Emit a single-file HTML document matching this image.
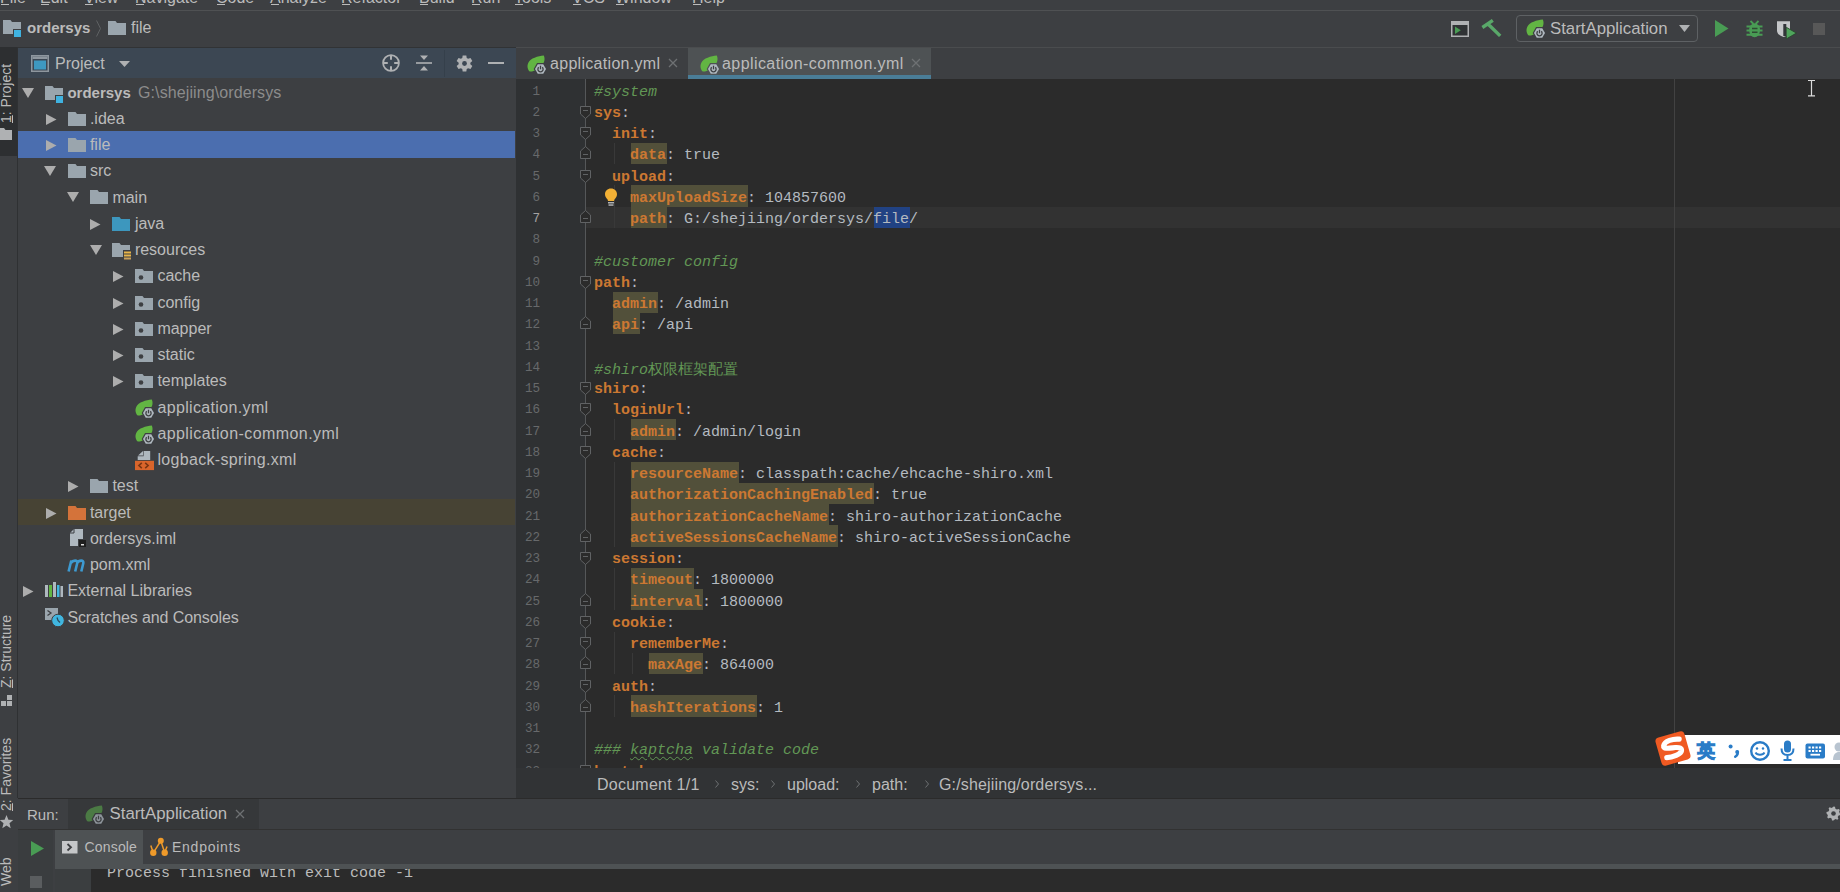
<!DOCTYPE html><html><head><meta charset="utf-8"><style>
*{margin:0;padding:0;box-sizing:border-box}
html,body{width:1840px;height:892px;overflow:hidden;background:#3D3F42;font-family:"Liberation Sans",sans-serif;color:#BBBBBB}
.a{position:absolute}
.t{position:absolute;white-space:nowrap;font-size:16px;line-height:20px;color:#BBBBBB}
.m{font-family:"Liberation Mono",monospace}
svg{position:absolute;overflow:visible}
.ln{position:absolute;left:0;width:24px;text-align:right;font-family:"Liberation Mono",monospace;font-size:12.6px;line-height:21.25px;color:#67696B}
.cl{position:absolute;left:78px;white-space:pre;font-family:"Liberation Mono",monospace;font-size:15px;line-height:21.25px;color:#B4BAC0}
.k{color:#CC7832;font-weight:bold}
.kh{color:#CC7832;font-weight:bold;background:#52503A}
.c{color:#629755;font-style:italic}
.cjk{font-family:"Liberation Sans",sans-serif}
</style></head><body>
<div class="a" style="left:0;top:0;width:1840px;height:10px;overflow:hidden">
<div class="t" style="left:0px;top:-12px">File</div>
<div class="a" style="left:1px;top:4px;width:8px;height:1px;background:#BBBBBB"></div>
<div class="t" style="left:40px;top:-12px">Edit</div>
<div class="a" style="left:41px;top:4px;width:8px;height:1px;background:#BBBBBB"></div>
<div class="t" style="left:84px;top:-12px">View</div>
<div class="a" style="left:85px;top:4px;width:8px;height:1px;background:#BBBBBB"></div>
<div class="t" style="left:135px;top:-12px">Navigate</div>
<div class="a" style="left:136px;top:4px;width:8px;height:1px;background:#BBBBBB"></div>
<div class="t" style="left:216px;top:-12px">Code</div>
<div class="a" style="left:217px;top:4px;width:8px;height:1px;background:#BBBBBB"></div>
<div class="t" style="left:270px;top:-12px">Analyze</div>
<div class="a" style="left:271px;top:4px;width:8px;height:1px;background:#BBBBBB"></div>
<div class="t" style="left:341px;top:-12px">Refactor</div>
<div class="a" style="left:342px;top:4px;width:8px;height:1px;background:#BBBBBB"></div>
<div class="t" style="left:419px;top:-12px">Build</div>
<div class="a" style="left:420px;top:4px;width:8px;height:1px;background:#BBBBBB"></div>
<div class="t" style="left:471px;top:-12px">Run</div>
<div class="a" style="left:472px;top:4px;width:8px;height:1px;background:#BBBBBB"></div>
<div class="t" style="left:514px;top:-12px">Tools</div>
<div class="a" style="left:515px;top:4px;width:8px;height:1px;background:#BBBBBB"></div>
<div class="t" style="left:572px;top:-12px">VCS</div>
<div class="a" style="left:573px;top:4px;width:8px;height:1px;background:#BBBBBB"></div>
<div class="t" style="left:615px;top:-12px">Window</div>
<div class="a" style="left:616px;top:4px;width:8px;height:1px;background:#BBBBBB"></div>
<div class="t" style="left:692px;top:-12px">Help</div>
<div class="a" style="left:693px;top:4px;width:8px;height:1px;background:#BBBBBB"></div>
</div>
<div class="a" style="left:0;top:10px;width:1840px;height:1px;background:#4F5153"></div>
<svg style="left:3px;top:20px" width="19" height="18" viewBox="0 0 19 18"><path d="M0 0H7.5L9 2H18V9H10V14H0Z" fill="#9AA5AD"/><rect x="10.5" y="9.5" width="8" height="8" fill="#3FB2E0" stroke="#3D3F42" stroke-width="1"/></svg>
<div class="t" style="left:27px;top:18px;font-weight:bold;font-size:15px;">ordersys</div>
<svg style="left:96px;top:20px" width="5" height="17" viewBox="0 0 5 17"><path d="M0.5 0.5L4.5 8.5L0.5 16.5" fill="none" stroke="#5E6163" stroke-width="1"/></svg>
<svg style="left:108px;top:21px" width="18" height="14" viewBox="0 0 18 14"><path d="M0 0H7.5L9 2H18V14H0Z" fill="#9AA5AD"/></svg>
<div class="t" style="left:131px;top:18px">file</div>
<svg style="left:1451px;top:21px" width="18" height="16" viewBox="0 0 18 16"><rect x="0.75" y="0.75" width="16.5" height="14.5" fill="#303335" stroke="#AFB1B3" stroke-width="1.5"/><rect x="1" y="1" width="16" height="3" fill="#AFB1B3"/><path d="M4 5.5L9.8 9.2L4 13Z" fill="#499C54"/></svg>
<svg style="left:1476px;top:14px" width="30" height="30" viewBox="0 0 30 30"><path d="M6.4 13.5L16.8 6.4M12 10L24.2 21.9" stroke="#59A869" stroke-width="3.4"/></svg>
<div class="a" style="left:1516px;top:15px;width:182px;height:27px;border:1px solid #5E6164;border-radius:4px;background:#3D3F42"></div>
<svg style="left:1526px;top:19px" width="19" height="20" viewBox="0 0 19 20"><path d="M16.8 0.5C11 1.2 3.5 3 1.2 8C0 10.5 0.3 13.5 2 16C3.5 17 6 16.5 9 15C13 13 16.5 9 17.3 6C17.8 4 17.5 2 16.8 0.5Z" fill="#62B543"/><path d="M20.3 14L16.9 19.9H10.1L6.7 14L10.1 8.1H16.9Z" fill="#3D3F42"/><path d="M19 14L16.25 18.8H10.75L8 14L10.75 9.2H16.25Z" fill="#AFB8BF"/><path d="M11.7 12.3A2.6 2.6 0 1 0 15.3 12.3" fill="none" stroke="#3D3F42" stroke-width="1.3"/><path d="M13.5 10.7V14.3" stroke="#3D3F42" stroke-width="1.3"/></svg>
<div class="t" style="left:1550px;top:19px;font-size:16.8px">StartApplication</div>
<svg style="left:1679px;top:25px" width="11" height="7" viewBox="0 0 11 7"><path d="M0 0H11L5.5 7Z" fill="#AFB1B3"/></svg>
<svg style="left:1715px;top:20px" width="14" height="17" viewBox="0 0 14 17"><path d="M0 0L13.5 8.5L0 17Z" fill="#499C54"/></svg>
<svg style="left:1740px;top:14px" width="30" height="30" viewBox="0 0 30 30"><path d="M10.5 7L13.5 10M18.5 7L15.5 10" stroke="#499C54" stroke-width="1.8"/><ellipse cx="14.6" cy="16.3" rx="5.4" ry="7" fill="#499C54"/><path d="M6.5 12.5H22.5M6.5 16.6H22.5M6.5 20.7H22.5" stroke="#499C54" stroke-width="2"/><path d="M12 14.5H17.5M12 18.3H17.5" stroke="#2F4A33" stroke-width="1.4"/></svg>
<svg style="left:1772px;top:14px" width="30" height="30" viewBox="0 0 30 30"><path d="M5 7.3H18V16.5C18 19.5 15.5 21.8 11.5 23C7.5 21.8 5 19.5 5 16.5Z" fill="#C5C7C9"/><rect x="11.3" y="10" width="3" height="12" fill="#33363A"/><path d="M14.3 13.3L24.4 19.1L14.3 24.9Z" fill="#4FA55C" stroke="#27402B" stroke-width="0.8"/></svg>
<div class="a" style="left:1812.5px;top:23px;width:12.5px;height:12px;background:#585858"></div>
<div class="a" style="left:0;top:47px;width:1840px;height:1px;background:#313335"></div>
<div class="a" style="left:0;top:47px;width:17px;height:845px;background:#3D3F42"></div>
<div class="a" style="left:0;top:47px;width:17px;height:109px;background:#2D2F31"></div>
<div class="a" style="left:17px;top:47px;width:1px;height:751px;background:#2F3133"></div>
<div class="t" style="left:-1px;top:123px;font-size:14px;line-height:14px;color:#BBBBBB;transform-origin:0 0;transform:rotate(-90deg)"><u>1</u>: Project</div>
<svg style="left:0px;top:128px" width="12" height="13" viewBox="0 0 12 13"><path d="M-2 0H4L5.5 2H12V12H-2Z" fill="#AFB1B3"/></svg>
<div class="t" style="left:-1px;top:688px;font-size:14px;line-height:14px;color:#BBBBBB;transform-origin:0 0;transform:rotate(-90deg)"><u>Z</u>: Structure</div>
<svg style="left:1px;top:695px" width="12" height="12" viewBox="0 0 12 12"><rect x="0" y="6" width="5" height="5" fill="#AFB1B3"/><rect x="6" y="6" width="5" height="5" fill="#AFB1B3"/><rect x="6" y="0" width="5" height="5" fill="#AFB1B3"/></svg>
<div class="t" style="left:-1px;top:811px;font-size:14px;line-height:14px;color:#BBBBBB;transform-origin:0 0;transform:rotate(-90deg)"><u>2</u>: Favorites</div>
<svg style="left:0px;top:815px" width="13" height="14" viewBox="0 0 13 14"><path d="M6.5 0L8.4 4.8L13.2 5.1L9.5 8.3L10.7 13.2L6.5 10.5L2.3 13.2L3.5 8.3L-0.2 5.1L4.6 4.8Z" fill="#AFB1B3"/></svg>
<div class="t" style="left:-1px;top:886px;font-size:14px;line-height:14px;color:#BBBBBB;transform-origin:0 0;transform:rotate(-90deg)">Web</div>
<div class="a" style="left:18px;top:48px;width:498px;height:30px;background:#3C4753"></div>
<svg style="left:31px;top:55px" width="18" height="17" viewBox="0 0 18 17"><rect x="0.75" y="0.75" width="16.5" height="15.5" fill="#3C4753" stroke="#8E979F" stroke-width="1.5"/><rect x="1.5" y="1.5" width="15" height="2.5" fill="#8E979F"/><rect x="3" y="5.5" width="12" height="9" fill="#3E98C0"/></svg>
<div class="t" style="left:55px;top:54px;font-size:16px">Project</div>
<svg style="left:119px;top:61px" width="11" height="6" viewBox="0 0 11 6"><path d="M0 0H11L5.5 6Z" fill="#AFB1B3"/></svg>
<svg style="left:382px;top:54px" width="18" height="18" viewBox="0 0 18 18"><circle cx="9" cy="9" r="7.9" fill="none" stroke="#AFB1B3" stroke-width="1.8"/><path d="M9 1.5V5.8M9 12.2V16.5M1.5 9H5.8M12.2 9H16.5" stroke="#AFB1B3" stroke-width="2"/></svg>
<svg style="left:416px;top:55px" width="16" height="16" viewBox="0 0 16 16"><path d="M0 8H16" stroke="#AFB1B3" stroke-width="1.6"/><path d="M4 0.5H12L8 5Z M4 15.5H12L8 11Z" fill="#AFB1B3"/></svg>
<div class="a" style="left:444px;top:50px;width:1px;height:27px;background:#35404B"></div>
<svg style="left:456px;top:54.5px" width="17" height="17" viewBox="0 0 17 17"><path d="M6.29 3.03 L6.66 0.51 L10.34 0.51 L10.71 3.03 L12.13 3.85 L14.50 2.91 L16.34 6.10 L14.34 7.68 L14.34 9.32 L16.34 10.90 L14.50 14.09 L12.13 13.15 L10.71 13.97 L10.34 16.49 L6.66 16.49 L6.29 13.97 L4.87 13.15 L2.50 14.09 L0.66 10.90 L2.66 9.32 L2.66 7.68 L0.66 6.10 L2.50 2.91 L4.87 3.85Z" fill="#AFB1B3"/><circle cx="8.5" cy="8.5" r="2.4" fill="#3C4753"/></svg>
<div class="a" style="left:488px;top:62px;width:16px;height:2px;background:#AFB1B3"></div>
<div class="a" style="left:18px;top:130.5px;width:497px;height:27px;background:#4B6EAF"></div>
<div class="a" style="left:18px;top:498.5px;width:497px;height:26px;background:#474334"></div>
<svg style="left:22px;top:88px" width="12" height="10" viewBox="0 0 12 10"><path d="M0 0H12L6 10Z" fill="#ADADAD"/></svg>
<svg style="left:45px;top:86px" width="19" height="18" viewBox="0 0 19 18"><path d="M0 0H7.5L9 2H18V9H10V14H0Z" fill="#9AA5AD"/><rect x="10.5" y="9.5" width="8" height="8" fill="#3FB2E0" stroke="#3D3F42" stroke-width="1"/></svg>
<div class="t" style="left:67.4px;top:82.7px;font-weight:bold;font-size:15px">ordersys</div>
<div class="t" style="left:138px;top:82.7px;color:#8C8C8C;letter-spacing:0.1px">G:\shejiing\ordersys</div>
<svg style="left:46px;top:114px" width="11" height="11" viewBox="0 0 11 11"><path d="M0 0L10.5 5.5L0 11Z" fill="#ADADAD"/></svg>
<svg style="left:68px;top:112px" width="18" height="14" viewBox="0 0 18 14"><path d="M0 0H7.5L9 2H18V14H0Z" fill="#9AA5AD"/></svg>
<div class="t" style="left:89.9px;top:108.95px;">.idea</div>
<svg style="left:46px;top:140px" width="11" height="11" viewBox="0 0 11 11"><path d="M0 0L10.5 5.5L0 11Z" fill="#ADADAD"/></svg>
<svg style="left:68px;top:138px" width="18" height="14" viewBox="0 0 18 14"><path d="M0 0H7.5L9 2H18V14H0Z" fill="#9AA5AD"/></svg>
<div class="t" style="left:89.9px;top:135.2px;">file</div>
<svg style="left:44px;top:166px" width="12" height="10" viewBox="0 0 12 10"><path d="M0 0H12L6 10Z" fill="#ADADAD"/></svg>
<svg style="left:68px;top:164px" width="18" height="14" viewBox="0 0 18 14"><path d="M0 0H7.5L9 2H18V14H0Z" fill="#9AA5AD"/></svg>
<div class="t" style="left:89.9px;top:161.45px;">src</div>
<svg style="left:67px;top:192px" width="12" height="10" viewBox="0 0 12 10"><path d="M0 0H12L6 10Z" fill="#ADADAD"/></svg>
<svg style="left:90px;top:190px" width="18" height="14" viewBox="0 0 18 14"><path d="M0 0H7.5L9 2H18V14H0Z" fill="#9AA5AD"/></svg>
<div class="t" style="left:112.4px;top:187.7px;">main</div>
<svg style="left:90px;top:219px" width="11" height="11" viewBox="0 0 11 11"><path d="M0 0L10.5 5.5L0 11Z" fill="#ADADAD"/></svg>
<svg style="left:112px;top:217px" width="18" height="14" viewBox="0 0 18 14"><path d="M0 0H7.5L9 2H18V14H0Z" fill="#3D97BE"/></svg>
<div class="t" style="left:134.9px;top:213.95px;">java</div>
<svg style="left:90px;top:245px" width="12" height="10" viewBox="0 0 12 10"><path d="M0 0H12L6 10Z" fill="#ADADAD"/></svg>
<svg style="left:112px;top:243px" width="19" height="17" viewBox="0 0 19 17"><path d="M0 0H7.5L9 2H18V7H11V14H0Z" fill="#9AA5AD"/><rect x="11" y="7.5" width="8" height="9" fill="#3D3F42"/><rect x="12" y="8.5" width="7" height="2" fill="#E8B54A"/><rect x="12" y="11.5" width="7" height="2" fill="#E8B54A"/><rect x="12" y="14.5" width="7" height="2" fill="#C9A05A"/></svg>
<div class="t" style="left:134.9px;top:240.2px;">resources</div>
<svg style="left:113px;top:271px" width="11" height="11" viewBox="0 0 11 11"><path d="M0 0L10.5 5.5L0 11Z" fill="#ADADAD"/></svg>
<svg style="left:135px;top:269px" width="18" height="14" viewBox="0 0 18 14"><path d="M0 0H7.5L9 2H18V14H0Z" fill="#9AA5AD"/><circle cx="6" cy="8.5" r="2.3" fill="#3D3F42"/></svg>
<div class="t" style="left:157.4px;top:266.45px;">cache</div>
<svg style="left:113px;top:298px" width="11" height="11" viewBox="0 0 11 11"><path d="M0 0L10.5 5.5L0 11Z" fill="#ADADAD"/></svg>
<svg style="left:135px;top:296px" width="18" height="14" viewBox="0 0 18 14"><path d="M0 0H7.5L9 2H18V14H0Z" fill="#9AA5AD"/><circle cx="6" cy="8.5" r="2.3" fill="#3D3F42"/></svg>
<div class="t" style="left:157.4px;top:292.7px;">config</div>
<svg style="left:113px;top:324px" width="11" height="11" viewBox="0 0 11 11"><path d="M0 0L10.5 5.5L0 11Z" fill="#ADADAD"/></svg>
<svg style="left:135px;top:322px" width="18" height="14" viewBox="0 0 18 14"><path d="M0 0H7.5L9 2H18V14H0Z" fill="#9AA5AD"/><circle cx="6" cy="8.5" r="2.3" fill="#3D3F42"/></svg>
<div class="t" style="left:157.4px;top:318.95px;">mapper</div>
<svg style="left:113px;top:350px" width="11" height="11" viewBox="0 0 11 11"><path d="M0 0L10.5 5.5L0 11Z" fill="#ADADAD"/></svg>
<svg style="left:135px;top:348px" width="18" height="14" viewBox="0 0 18 14"><path d="M0 0H7.5L9 2H18V14H0Z" fill="#9AA5AD"/><circle cx="6" cy="8.5" r="2.3" fill="#3D3F42"/></svg>
<div class="t" style="left:157.4px;top:345.2px;">static</div>
<svg style="left:113px;top:376px" width="11" height="11" viewBox="0 0 11 11"><path d="M0 0L10.5 5.5L0 11Z" fill="#ADADAD"/></svg>
<svg style="left:135px;top:374px" width="18" height="14" viewBox="0 0 18 14"><path d="M0 0H7.5L9 2H18V14H0Z" fill="#9AA5AD"/><circle cx="6" cy="8.5" r="2.3" fill="#3D3F42"/></svg>
<div class="t" style="left:157.4px;top:371.45px;">templates</div>
<svg style="left:135px;top:399px" width="19" height="20" viewBox="0 0 19 20"><path d="M16.8 0.5C11 1.2 3.5 3 1.2 8C0 10.5 0.3 13.5 2 16C3.5 17 6 16.5 9 15C13 13 16.5 9 17.3 6C17.8 4 17.5 2 16.8 0.5Z" fill="#62B543"/><path d="M20.3 14L16.9 19.9H10.1L6.7 14L10.1 8.1H16.9Z" fill="#3D3F42"/><path d="M19 14L16.25 18.8H10.75L8 14L10.75 9.2H16.25Z" fill="#AFB8BF"/><path d="M11.7 12.3A2.6 2.6 0 1 0 15.3 12.3" fill="none" stroke="#3D3F42" stroke-width="1.3"/><path d="M13.5 10.7V14.3" stroke="#3D3F42" stroke-width="1.3"/></svg>
<div class="t" style="left:157.4px;top:397.7px;letter-spacing:0.35px;">application.yml</div>
<svg style="left:135px;top:425px" width="19" height="20" viewBox="0 0 19 20"><path d="M16.8 0.5C11 1.2 3.5 3 1.2 8C0 10.5 0.3 13.5 2 16C3.5 17 6 16.5 9 15C13 13 16.5 9 17.3 6C17.8 4 17.5 2 16.8 0.5Z" fill="#62B543"/><path d="M20.3 14L16.9 19.9H10.1L6.7 14L10.1 8.1H16.9Z" fill="#3D3F42"/><path d="M19 14L16.25 18.8H10.75L8 14L10.75 9.2H16.25Z" fill="#AFB8BF"/><path d="M11.7 12.3A2.6 2.6 0 1 0 15.3 12.3" fill="none" stroke="#3D3F42" stroke-width="1.3"/><path d="M13.5 10.7V14.3" stroke="#3D3F42" stroke-width="1.3"/></svg>
<div class="t" style="left:157.4px;top:423.95px;letter-spacing:0.42px;">application-common.yml</div>
<svg style="left:135px;top:450px" width="19" height="21" viewBox="0 0 19 21"><path d="M3 5.6L8 1V5.6Z" fill="#AFB8BF"/><path d="M8.6 1H15.2V10H2.7V6.3H8.6Z" fill="#AFB8BF"/><rect x="0" y="10.8" width="19" height="9.3" fill="#D9652B"/><path d="M6.8 12.8L3.9 15.5L6.8 18.2M10.2 12.8L13.1 15.5L10.2 18.2" fill="none" stroke="#7A3512" stroke-width="1.6"/></svg>
<div class="t" style="left:157.4px;top:450.2px;letter-spacing:0.32px;">logback-spring.xml</div>
<svg style="left:68px;top:481px" width="11" height="11" viewBox="0 0 11 11"><path d="M0 0L10.5 5.5L0 11Z" fill="#ADADAD"/></svg>
<svg style="left:90px;top:479px" width="18" height="14" viewBox="0 0 18 14"><path d="M0 0H7.5L9 2H18V14H0Z" fill="#9AA5AD"/></svg>
<div class="t" style="left:112.4px;top:476.45px;">test</div>
<svg style="left:46px;top:508px" width="11" height="11" viewBox="0 0 11 11"><path d="M0 0L10.5 5.5L0 11Z" fill="#ADADAD"/></svg>
<svg style="left:68px;top:506px" width="18" height="14" viewBox="0 0 18 14"><path d="M0 0H7.5L9 2H18V14H0Z" fill="#D4733A"/></svg>
<div class="t" style="left:89.9px;top:502.7px;">target</div>
<svg style="left:70px;top:529px" width="17" height="19" viewBox="0 0 17 19"><path d="M4 0H13V17H0V4Z" fill="#AFB8BF"/><path d="M4 0V4H0" fill="none" stroke="#3D3F42" stroke-width="1"/><rect x="8.5" y="10.5" width="8" height="8" fill="#1E1E1E" stroke="#3D3F42" stroke-width="1"/><rect x="11" y="15" width="3" height="1.5" fill="#DDDDDD"/></svg>
<div class="t" style="left:89.9px;top:528.95px;">ordersys.iml</div>
<svg style="left:67px;top:559px" width="19" height="13" viewBox="0 0 19 13"><path d="M1.6 12.5L4.3 1.5M3.9 4C5.8 1 11 0.6 10.2 4.2L8.2 12.5M10 4.2C11.9 1 17.1 0.6 16.3 4.2L14.3 12.5" fill="none" stroke="#3D9AD1" stroke-width="2.6"/></svg>
<div class="t" style="left:89.9px;top:555.2px;">pom.xml</div>
<svg style="left:23px;top:586px" width="11" height="11" viewBox="0 0 11 11"><path d="M0 0L10.5 5.5L0 11Z" fill="#ADADAD"/></svg>
<svg style="left:45px;top:582px" width="18" height="15" viewBox="0 0 18 15"><rect x="0" y="3" width="3" height="12" fill="#AFB8BF"/><rect x="4" y="3" width="3" height="12" fill="#62B543"/><rect x="8" y="0" width="3" height="15" fill="#AFB8BF"/><rect x="12" y="3" width="2.5" height="12" fill="#40B6E0"/><rect x="15.5" y="4" width="2.5" height="11" fill="#AFB8BF"/></svg>
<div class="t" style="left:67.4px;top:581.45px;">External Libraries</div>
<svg style="left:45px;top:608px" width="20" height="19" viewBox="0 0 20 19"><rect x="0" y="0" width="13" height="12" fill="#9AA5AD"/><path d="M2.5 2.5L6 5L2.5 7.5" fill="none" stroke="#3D3F42" stroke-width="1.3"/><circle cx="13" cy="12.5" r="6.3" fill="#40B6E0" stroke="#3D3F42" stroke-width="1"/><path d="M12 9.5L13 12.5L15 14.5" fill="none" stroke="#2B4A5A" stroke-width="1.3"/></svg>
<div class="t" style="left:67.4px;top:607.7px;letter-spacing:-0.1px;">Scratches and Consoles</div>
<div class="a" style="left:516px;top:47px;width:1324px;height:32px;background:#3D3F42"></div>
<div class="a" style="left:516px;top:47px;width:1324px;height:1px;background:#4A4C4E"></div>
<div class="a" style="left:688px;top:48px;width:243px;height:27px;background:#4E5254"></div>
<div class="a" style="left:688px;top:75px;width:243px;height:4px;background:#4A7D97"></div>
<svg style="left:527px;top:55px" width="19" height="20" viewBox="0 0 19 20"><path d="M16.8 0.5C11 1.2 3.5 3 1.2 8C0 10.5 0.3 13.5 2 16C3.5 17 6 16.5 9 15C13 13 16.5 9 17.3 6C17.8 4 17.5 2 16.8 0.5Z" fill="#62B543"/><path d="M20.3 14L16.9 19.9H10.1L6.7 14L10.1 8.1H16.9Z" fill="#3D3F42"/><path d="M19 14L16.25 18.8H10.75L8 14L10.75 9.2H16.25Z" fill="#AFB8BF"/><path d="M11.7 12.3A2.6 2.6 0 1 0 15.3 12.3" fill="none" stroke="#3D3F42" stroke-width="1.3"/><path d="M13.5 10.7V14.3" stroke="#3D3F42" stroke-width="1.3"/></svg>
<div class="t" style="left:550px;top:54px;letter-spacing:0.3px">application.yml</div>
<svg style="left:669px;top:59px" width="8" height="8" viewBox="0 0 8 8"><path d="M0 0L8 8M8 0L0 8" stroke="#6E7173" stroke-width="1.3"/></svg>
<svg style="left:700px;top:55px" width="19" height="20" viewBox="0 0 19 20"><path d="M16.8 0.5C11 1.2 3.5 3 1.2 8C0 10.5 0.3 13.5 2 16C3.5 17 6 16.5 9 15C13 13 16.5 9 17.3 6C17.8 4 17.5 2 16.8 0.5Z" fill="#62B543"/><path d="M20.3 14L16.9 19.9H10.1L6.7 14L10.1 8.1H16.9Z" fill="#4E5254"/><path d="M19 14L16.25 18.8H10.75L8 14L10.75 9.2H16.25Z" fill="#AFB8BF"/><path d="M11.7 12.3A2.6 2.6 0 1 0 15.3 12.3" fill="none" stroke="#3D3F42" stroke-width="1.3"/><path d="M13.5 10.7V14.3" stroke="#3D3F42" stroke-width="1.3"/></svg>
<div class="t" style="left:722px;top:54px;letter-spacing:0.42px">application-common.yml</div>
<svg style="left:912px;top:59px" width="8" height="8" viewBox="0 0 8 8"><path d="M0 0L8 8M8 0L0 8" stroke="#6E7173" stroke-width="1.3"/></svg>
<div class="a" style="left:516px;top:79px;width:1324px;height:689px;background:#2B2B2B;overflow:hidden">
<div class="a" style="left:0;top:0;width:69px;height:689px;background:#2F3133"></div>
<div class="a" style="left:70px;top:127.5px;width:1254px;height:21.25px;background:#323232"></div>
<div class="a" style="left:1158px;top:0;width:1px;height:689px;background:#424242"></div>
<div class="a" style="left:69px;top:0;width:1px;height:689px;background:#555759"></div>
<div class="a" style="left:98.0px;top:63.75px;width:1px;height:21.25px;background:#393939"></div>
<div class="a" style="left:98.0px;top:106.25px;width:1px;height:42.5px;background:#393939"></div>
<div class="a" style="left:98.0px;top:340.0px;width:1px;height:21.25px;background:#393939"></div>
<div class="a" style="left:98.0px;top:382.5px;width:1px;height:85.0px;background:#393939"></div>
<div class="a" style="left:98.0px;top:488.75px;width:1px;height:42.5px;background:#393939"></div>
<div class="a" style="left:98.0px;top:552.5px;width:1px;height:42.5px;background:#393939"></div>
<div class="a" style="left:98.0px;top:616.25px;width:1px;height:21.25px;background:#393939"></div>
<div class="a" style="left:116.0px;top:573.75px;width:1px;height:21.25px;background:#393939"></div>
<div class="ln" style="top:2.5px;color:#67696B">1</div>
<div class="cl" style="top:2.5px;height:21.25px"><span class="c">#system</span></div>
<div class="ln" style="top:23.75px;color:#67696B">2</div>
<div class="cl" style="top:23.75px;height:21.25px"><span class="k">sys</span>:</div>
<div class="ln" style="top:45.0px;color:#67696B">3</div>
<div class="cl" style="top:45.0px;height:21.25px">  <span class="k">init</span>:</div>
<div class="ln" style="top:66.25px;color:#67696B">4</div>
<div class="a" style="left:114.5px;top:63.75px;width:36px;height:21.25px;background:#52503A"></div>
<div class="cl" style="top:66.25px;height:21.25px">    <span class="k">data</span>: true</div>
<div class="ln" style="top:87.5px;color:#67696B">5</div>
<div class="cl" style="top:87.5px;height:21.25px">  <span class="k">upload</span>:</div>
<div class="ln" style="top:108.75px;color:#67696B">6</div>
<div class="a" style="left:114.5px;top:106.25px;width:117px;height:21.25px;background:#52503A"></div>
<div class="cl" style="top:108.75px;height:21.25px">    <span class="k">maxUploadSize</span>: 104857600</div>
<div class="ln" style="top:130.0px;color:#A4A3A3">7</div>
<div class="a" style="left:114.5px;top:127.5px;width:36px;height:21.25px;background:#52503A"></div>
<div class="a" style="left:357.5px;top:127.5px;width:36px;height:21.25px;background:#214283"></div>
<div class="cl" style="top:130.0px;height:21.25px">    <span class="k">path</span>: G:/shejiing/ordersys/file/</div>
<div class="ln" style="top:151.25px;color:#67696B">8</div>
<div class="cl" style="top:151.25px;height:21.25px"></div>
<div class="ln" style="top:172.5px;color:#67696B">9</div>
<div class="cl" style="top:172.5px;height:21.25px"><span class="c">#customer config</span></div>
<div class="ln" style="top:193.75px;color:#67696B">10</div>
<div class="cl" style="top:193.75px;height:21.25px"><span class="k">path</span>:</div>
<div class="ln" style="top:215.0px;color:#67696B">11</div>
<div class="a" style="left:96.5px;top:212.5px;width:45px;height:21.25px;background:#52503A"></div>
<div class="cl" style="top:215.0px;height:21.25px">  <span class="k">admin</span>: /admin</div>
<div class="ln" style="top:236.25px;color:#67696B">12</div>
<div class="a" style="left:96.5px;top:233.75px;width:27px;height:21.25px;background:#52503A"></div>
<div class="cl" style="top:236.25px;height:21.25px">  <span class="k">api</span>: /api</div>
<div class="ln" style="top:257.5px;color:#67696B">13</div>
<div class="cl" style="top:257.5px;height:21.25px"></div>
<div class="ln" style="top:278.75px;color:#67696B">14</div>
<div class="cl" style="top:278.75px;height:21.25px"><span class="c">#shiro</span><span class="cjk" style="color:#629755;font-size:15px">权限框架配置</span></div>
<div class="ln" style="top:300.0px;color:#67696B">15</div>
<div class="cl" style="top:300.0px;height:21.25px"><span class="k">shiro</span>:</div>
<div class="ln" style="top:321.25px;color:#67696B">16</div>
<div class="cl" style="top:321.25px;height:21.25px">  <span class="k">loginUrl</span>:</div>
<div class="ln" style="top:342.5px;color:#67696B">17</div>
<div class="a" style="left:114.5px;top:340.0px;width:45px;height:21.25px;background:#52503A"></div>
<div class="cl" style="top:342.5px;height:21.25px">    <span class="k">admin</span>: /admin/login</div>
<div class="ln" style="top:363.75px;color:#67696B">18</div>
<div class="cl" style="top:363.75px;height:21.25px">  <span class="k">cache</span>:</div>
<div class="ln" style="top:385.0px;color:#67696B">19</div>
<div class="a" style="left:114.5px;top:382.5px;width:108px;height:21.25px;background:#52503A"></div>
<div class="cl" style="top:385.0px;height:21.25px">    <span class="k">resourceName</span>: classpath:cache/ehcache-shiro.xml</div>
<div class="ln" style="top:406.25px;color:#67696B">20</div>
<div class="a" style="left:114.5px;top:403.75px;width:243px;height:21.25px;background:#52503A"></div>
<div class="cl" style="top:406.25px;height:21.25px">    <span class="k">authorizationCachingEnabled</span>: true</div>
<div class="ln" style="top:427.5px;color:#67696B">21</div>
<div class="a" style="left:114.5px;top:425.0px;width:198px;height:21.25px;background:#52503A"></div>
<div class="cl" style="top:427.5px;height:21.25px">    <span class="k">authorizationCacheName</span>: shiro-authorizationCache</div>
<div class="ln" style="top:448.75px;color:#67696B">22</div>
<div class="a" style="left:114.5px;top:446.25px;width:207px;height:21.25px;background:#52503A"></div>
<div class="cl" style="top:448.75px;height:21.25px">    <span class="k">activeSessionsCacheName</span>: shiro-activeSessionCache</div>
<div class="ln" style="top:470.0px;color:#67696B">23</div>
<div class="cl" style="top:470.0px;height:21.25px">  <span class="k">session</span>:</div>
<div class="ln" style="top:491.25px;color:#67696B">24</div>
<div class="a" style="left:114.5px;top:488.75px;width:63px;height:21.25px;background:#52503A"></div>
<div class="cl" style="top:491.25px;height:21.25px">    <span class="k">timeout</span>: 1800000</div>
<div class="ln" style="top:512.5px;color:#67696B">25</div>
<div class="a" style="left:114.5px;top:510.0px;width:72px;height:21.25px;background:#52503A"></div>
<div class="cl" style="top:512.5px;height:21.25px">    <span class="k">interval</span>: 1800000</div>
<div class="ln" style="top:533.75px;color:#67696B">26</div>
<div class="cl" style="top:533.75px;height:21.25px">  <span class="k">cookie</span>:</div>
<div class="ln" style="top:555.0px;color:#67696B">27</div>
<div class="cl" style="top:555.0px;height:21.25px">    <span class="k">rememberMe</span>:</div>
<div class="ln" style="top:576.25px;color:#67696B">28</div>
<div class="a" style="left:132.5px;top:573.75px;width:54px;height:21.25px;background:#52503A"></div>
<div class="cl" style="top:576.25px;height:21.25px">      <span class="k">maxAge</span>: 864000</div>
<div class="ln" style="top:597.5px;color:#67696B">29</div>
<div class="cl" style="top:597.5px;height:21.25px">  <span class="k">auth</span>:</div>
<div class="ln" style="top:618.75px;color:#67696B">30</div>
<div class="a" style="left:114.5px;top:616.25px;width:126px;height:21.25px;background:#52503A"></div>
<div class="cl" style="top:618.75px;height:21.25px">    <span class="k">hashIterations</span>: 1</div>
<div class="ln" style="top:640.0px;color:#67696B">31</div>
<div class="cl" style="top:640.0px;height:21.25px"></div>
<div class="ln" style="top:661.25px;color:#67696B">32</div>
<div class="cl" style="top:661.25px;height:21.25px"><span class="c">### </span><span class="c" style="text-decoration:underline wavy #629755;text-decoration-thickness:1px;text-underline-offset:2px">kaptcha</span><span class="c"> validate code</span></div>
<div class="ln" style="top:682.5px;color:#67696B">33</div>
<div class="cl" style="top:682.5px;height:21.25px"><span class="k">kaptcha</span>:</div>
<svg style="left:64px;top:27.0px" width="11" height="13" viewBox="0 0 11 13"><path d="M0.5 0.5H10.5V8L5.5 12.5L0.5 8Z" fill="#2B2B2B" stroke="#606264" stroke-width="1"/><path d="M3 4.5H8" stroke="#606264" stroke-width="1"/></svg>
<svg style="left:64px;top:48.0px" width="11" height="13" viewBox="0 0 11 13"><path d="M0.5 0.5H10.5V8L5.5 12.5L0.5 8Z" fill="#2B2B2B" stroke="#606264" stroke-width="1"/><path d="M3 4.5H8" stroke="#606264" stroke-width="1"/></svg>
<svg style="left:64px;top:90.5px" width="11" height="13" viewBox="0 0 11 13"><path d="M0.5 0.5H10.5V8L5.5 12.5L0.5 8Z" fill="#2B2B2B" stroke="#606264" stroke-width="1"/><path d="M3 4.5H8" stroke="#606264" stroke-width="1"/></svg>
<svg style="left:64px;top:197.0px" width="11" height="13" viewBox="0 0 11 13"><path d="M0.5 0.5H10.5V8L5.5 12.5L0.5 8Z" fill="#2B2B2B" stroke="#606264" stroke-width="1"/><path d="M3 4.5H8" stroke="#606264" stroke-width="1"/></svg>
<svg style="left:64px;top:303.0px" width="11" height="13" viewBox="0 0 11 13"><path d="M0.5 0.5H10.5V8L5.5 12.5L0.5 8Z" fill="#2B2B2B" stroke="#606264" stroke-width="1"/><path d="M3 4.5H8" stroke="#606264" stroke-width="1"/></svg>
<svg style="left:64px;top:324.0px" width="11" height="13" viewBox="0 0 11 13"><path d="M0.5 0.5H10.5V8L5.5 12.5L0.5 8Z" fill="#2B2B2B" stroke="#606264" stroke-width="1"/><path d="M3 4.5H8" stroke="#606264" stroke-width="1"/></svg>
<svg style="left:64px;top:367.0px" width="11" height="13" viewBox="0 0 11 13"><path d="M0.5 0.5H10.5V8L5.5 12.5L0.5 8Z" fill="#2B2B2B" stroke="#606264" stroke-width="1"/><path d="M3 4.5H8" stroke="#606264" stroke-width="1"/></svg>
<svg style="left:64px;top:473.0px" width="11" height="13" viewBox="0 0 11 13"><path d="M0.5 0.5H10.5V8L5.5 12.5L0.5 8Z" fill="#2B2B2B" stroke="#606264" stroke-width="1"/><path d="M3 4.5H8" stroke="#606264" stroke-width="1"/></svg>
<svg style="left:64px;top:537.0px" width="11" height="13" viewBox="0 0 11 13"><path d="M0.5 0.5H10.5V8L5.5 12.5L0.5 8Z" fill="#2B2B2B" stroke="#606264" stroke-width="1"/><path d="M3 4.5H8" stroke="#606264" stroke-width="1"/></svg>
<svg style="left:64px;top:558.0px" width="11" height="13" viewBox="0 0 11 13"><path d="M0.5 0.5H10.5V8L5.5 12.5L0.5 8Z" fill="#2B2B2B" stroke="#606264" stroke-width="1"/><path d="M3 4.5H8" stroke="#606264" stroke-width="1"/></svg>
<svg style="left:64px;top:600.5px" width="11" height="13" viewBox="0 0 11 13"><path d="M0.5 0.5H10.5V8L5.5 12.5L0.5 8Z" fill="#2B2B2B" stroke="#606264" stroke-width="1"/><path d="M3 4.5H8" stroke="#606264" stroke-width="1"/></svg>
<svg style="left:64px;top:685.5px" width="11" height="13" viewBox="0 0 11 13"><path d="M0.5 0.5H10.5V8L5.5 12.5L0.5 8Z" fill="#2B2B2B" stroke="#606264" stroke-width="1"/><path d="M3 4.5H8" stroke="#606264" stroke-width="1"/></svg>
<svg style="left:64px;top:67.0px" width="11" height="13" viewBox="0 0 11 13"><path d="M5.5 0.5L10.5 5V12.5H0.5V5Z" fill="#2B2B2B" stroke="#606264" stroke-width="1"/><path d="M3 8.5H8" stroke="#606264" stroke-width="1"/></svg>
<svg style="left:64px;top:131.0px" width="11" height="13" viewBox="0 0 11 13"><path d="M5.5 0.5L10.5 5V12.5H0.5V5Z" fill="#2B2B2B" stroke="#606264" stroke-width="1"/><path d="M3 8.5H8" stroke="#606264" stroke-width="1"/></svg>
<svg style="left:64px;top:237.0px" width="11" height="13" viewBox="0 0 11 13"><path d="M5.5 0.5L10.5 5V12.5H0.5V5Z" fill="#2B2B2B" stroke="#606264" stroke-width="1"/><path d="M3 8.5H8" stroke="#606264" stroke-width="1"/></svg>
<svg style="left:64px;top:343.5px" width="11" height="13" viewBox="0 0 11 13"><path d="M5.5 0.5L10.5 5V12.5H0.5V5Z" fill="#2B2B2B" stroke="#606264" stroke-width="1"/><path d="M3 8.5H8" stroke="#606264" stroke-width="1"/></svg>
<svg style="left:64px;top:450.0px" width="11" height="13" viewBox="0 0 11 13"><path d="M5.5 0.5L10.5 5V12.5H0.5V5Z" fill="#2B2B2B" stroke="#606264" stroke-width="1"/><path d="M3 8.5H8" stroke="#606264" stroke-width="1"/></svg>
<svg style="left:64px;top:513.5px" width="11" height="13" viewBox="0 0 11 13"><path d="M5.5 0.5L10.5 5V12.5H0.5V5Z" fill="#2B2B2B" stroke="#606264" stroke-width="1"/><path d="M3 8.5H8" stroke="#606264" stroke-width="1"/></svg>
<svg style="left:64px;top:577.0px" width="11" height="13" viewBox="0 0 11 13"><path d="M5.5 0.5L10.5 5V12.5H0.5V5Z" fill="#2B2B2B" stroke="#606264" stroke-width="1"/><path d="M3 8.5H8" stroke="#606264" stroke-width="1"/></svg>
<svg style="left:64px;top:620.0px" width="11" height="13" viewBox="0 0 11 13"><path d="M5.5 0.5L10.5 5V12.5H0.5V5Z" fill="#2B2B2B" stroke="#606264" stroke-width="1"/><path d="M3 8.5H8" stroke="#606264" stroke-width="1"/></svg>
<svg style="left:88px;top:109px" width="14" height="19" viewBox="0 0 14 19"><path d="M7 0.5C3.4 0.5 1 3 1 6.2C1 8.6 2.4 10 3.6 11.4L4 13H10L10.4 11.4C11.6 10 13 8.6 13 6.2C13 3 10.6 0.5 7 0.5Z" fill="#F2B035"/><rect x="4" y="14" width="6" height="1.5" fill="#AFB1B3"/><rect x="4.5" y="16.3" width="5" height="1.5" fill="#AFB1B3"/></svg>
<svg style="left:1291px;top:1px" width="9" height="18" viewBox="0 0 9 18"><path d="M1 0.5H8M4.5 0.5V15.8M1 15.8H8" stroke="#DDDDDD" stroke-width="1.2"/></svg>
</div>
<div class="a" style="left:516px;top:768px;width:1324px;height:30px;background:#313335"></div>
<div class="t" style="left:597px;top:775px;letter-spacing:0.25px;">Document 1/1</div>
<div class="t" style="left:731px;top:775px;">sys:</div>
<div class="t" style="left:787px;top:775px;">upload:</div>
<div class="t" style="left:872px;top:775px;">path:</div>
<div class="t" style="left:939px;top:775px;letter-spacing:0.15px;">G:/shejiing/ordersys...</div>
<svg style="left:715px;top:780px" width="4" height="8" viewBox="0 0 4 8"><path d="M0.5 0.5L3.5 4L0.5 7.5" fill="none" stroke="#6E7173" stroke-width="1"/></svg>
<svg style="left:771px;top:780px" width="4" height="8" viewBox="0 0 4 8"><path d="M0.5 0.5L3.5 4L0.5 7.5" fill="none" stroke="#6E7173" stroke-width="1"/></svg>
<svg style="left:856px;top:780px" width="4" height="8" viewBox="0 0 4 8"><path d="M0.5 0.5L3.5 4L0.5 7.5" fill="none" stroke="#6E7173" stroke-width="1"/></svg>
<svg style="left:925px;top:780px" width="4" height="8" viewBox="0 0 4 8"><path d="M0.5 0.5L3.5 4L0.5 7.5" fill="none" stroke="#6E7173" stroke-width="1"/></svg>
<div class="a" style="left:18px;top:798px;width:1822px;height:1px;background:#2B2B2B"></div>
<div class="a" style="left:18px;top:799px;width:1822px;height:30px;background:#3D3F42"></div>
<div class="t" style="left:27px;top:805px;font-size:15px">Run:</div>
<div class="a" style="left:68px;top:799px;width:191px;height:30px;background:#36383A"></div>
<svg style="left:85px;top:805px" width="19" height="20" viewBox="0 0 19 20"><path d="M16.8 0.5C11 1.2 3.5 3 1.2 8C0 10.5 0.3 13.5 2 16C3.5 17 6 16.5 9 15C13 13 16.5 9 17.3 6C17.8 4 17.5 2 16.8 0.5Z" fill="#4B7A44"/><path d="M20.3 14L16.9 19.9H10.1L6.7 14L10.1 8.1H16.9Z" fill="#36383A"/><path d="M19 14L16.25 18.8H10.75L8 14L10.75 9.2H16.25Z" fill="#8E959B"/><path d="M11.7 12.3A2.6 2.6 0 1 0 15.3 12.3" fill="none" stroke="#3D3F42" stroke-width="1.3"/><path d="M13.5 10.7V14.3" stroke="#3D3F42" stroke-width="1.3"/></svg>
<div class="t" style="left:109.6px;top:804px;font-size:16.8px">StartApplication</div>
<svg style="left:236px;top:810px" width="8" height="8" viewBox="0 0 8 8"><path d="M0 0L8 8M8 0L0 8" stroke="#6E7173" stroke-width="1.3"/></svg>
<svg style="left:1826px;top:806px" width="15" height="15" viewBox="0 0 15 15"><path d="M7.5 0.5L9 0.8L9.4 2.7L10.9 3.6L12.7 2.9L13.8 4L13.1 5.8L13.9 7.4L14.5 7.5V9L12.6 9.4L11.7 10.9L12.4 12.7L11.3 13.8L9.5 13.1L7.9 13.9L7.5 14.5H6L5.6 12.6L4.1 11.7L2.3 12.4L1.2 11.3L1.9 9.5L1.1 7.9L0.5 7.5V6L2.4 5.6L3.3 4.1L2.6 2.3L3.7 1.2L5.5 1.9L7.1 1.1Z" fill="#AFB1B3"/><circle cx="7.5" cy="7.5" r="2.3" fill="#3D3F42"/></svg>
<div class="a" style="left:18px;top:829px;width:1822px;height:1px;background:#323232"></div>
<div class="a" style="left:18px;top:830px;width:35px;height:62px;background:#3A3D3F"></div>
<svg style="left:31px;top:841px" width="13" height="15" viewBox="0 0 13 15"><path d="M0 0L13 7.5L0 15Z" fill="#499C54"/></svg>
<div class="a" style="left:30px;top:876px;width:12px;height:12px;background:#5A5D5F"></div>
<div class="a" style="left:53px;top:830px;width:1787px;height:34px;background:#3D3F42"></div>
<div class="a" style="left:55px;top:864px;width:1785px;height:5px;background:#4E5254"></div>
<div class="a" style="left:55px;top:830px;width:88px;height:39px;background:#4E5254"></div>
<svg style="left:62px;top:841px" width="16" height="13" viewBox="0 0 16 13"><rect x="0" y="0" width="15.5" height="12.5" fill="#C5C7C9"/><path d="M5.5 3L9 6.25L5.5 9.5" fill="none" stroke="#3D3F42" stroke-width="1.8"/></svg>
<div class="t" style="left:84.6px;top:837px;font-size:14px;letter-spacing:0.15px">Console</div>
<svg style="left:140px;top:832px" width="30" height="26" viewBox="0 0 30 26"><path d="M13.3 20.8L20.8 8.8L24.7 20.8M13.3 20.8L10.8 13.5M24.7 20.8L27 14.5" fill="none" stroke="#EE9A2A" stroke-width="1.5"/><circle cx="20.8" cy="8.8" r="3" fill="#EE9A2A"/><circle cx="13.3" cy="20.8" r="3.2" fill="#EE9A2A"/><circle cx="24.7" cy="20.8" r="3.2" fill="#EE9A2A"/></svg>
<div class="t" style="left:172px;top:837px;font-size:14px;letter-spacing:0.75px">Endpoints</div>
<div class="a" style="left:55px;top:869px;width:36px;height:23px;background:#3B3E40"></div>
<div class="a" style="left:91px;top:869px;width:1749px;height:23px;background:#2B2B2B;overflow:hidden"><div class="t m" style="left:16px;top:-5px;font-size:15px;line-height:20px;color:#BBBBBB">Process finished with exit code -1</div></div>
<div class="a" style="left:1678px;top:735px;width:162px;height:29px;background:#FFFFFF"></div>
<svg style="left:1655px;top:731px" width="36" height="35" viewBox="0 0 36 35"><g transform="rotate(-16 18 17.5)"><rect x="3" y="3" width="30" height="29" rx="4" fill="#F05A22"/><path d="M26.5 10.2C21 8 12 8 9.8 12.2C8 16 16 16.3 20.5 17.2C25 18.2 26.5 19.5 25.6 21.8C24.2 25 15 26 9.5 24.6" fill="none" stroke="#FFFFFF" stroke-width="5.2" stroke-linecap="round"/></g></svg>
<div class="t" style="left:1697px;top:740px;font-size:18px;line-height:22px;color:#2A7CC7;font-weight:900;-webkit-text-stroke:1.1px #2A7CC7">英</div>
<svg style="left:1728px;top:742px" width="12" height="16" viewBox="0 0 12 16"><circle cx="2.6" cy="4.6" r="2" fill="#2A7CC7"/><path d="M9.3 9.5C10.2 11 9.6 13 7.2 14.8" fill="none" stroke="#2A7CC7" stroke-width="2.4" stroke-linecap="round"/><circle cx="9.2" cy="10" r="2" fill="#2A7CC7"/></svg>
<svg style="left:1750px;top:741px" width="20" height="20" viewBox="0 0 20 20"><circle cx="10" cy="10" r="8.8" fill="none" stroke="#2A7CC7" stroke-width="2.4"/><circle cx="7" cy="7.5" r="1.2" fill="#2A7CC7"/><circle cx="13" cy="7.5" r="1.2" fill="#2A7CC7"/><path d="M5.5 11.5C7 14.5 13 14.5 14.5 11.5" fill="none" stroke="#2A7CC7" stroke-width="1.8"/></svg>
<svg style="left:1780px;top:740px" width="15" height="22" viewBox="0 0 15 22"><rect x="4" y="0.5" width="7" height="12" rx="3.5" fill="#2A7CC7"/><path d="M1.5 8.5C1.5 13 4 15 7.5 15C11 15 13.5 13 13.5 8.5M7.5 15V19.5M3.5 20H11.5" fill="none" stroke="#2A7CC7" stroke-width="2"/></svg>
<svg style="left:1805px;top:743px" width="21" height="16" viewBox="0 0 21 16"><rect x="0.5" y="0.5" width="19.5" height="15" rx="2" fill="#2A7CC7"/><rect x="3.5" y="3.5" width="2.2" height="2" fill="#FFFFFF"/><rect x="7" y="3.5" width="2.2" height="2" fill="#FFFFFF"/><rect x="10.5" y="3.5" width="2.2" height="2" fill="#FFFFFF"/><rect x="14" y="3.5" width="2.2" height="2" fill="#FFFFFF"/><rect x="3.5" y="7" width="2.2" height="2" fill="#FFFFFF"/><rect x="7" y="7" width="2.2" height="2" fill="#FFFFFF"/><rect x="10.5" y="7" width="2.2" height="2" fill="#FFFFFF"/><rect x="14" y="7" width="2.2" height="2" fill="#FFFFFF"/><rect x="5.5" y="10.8" width="9.5" height="1.8" fill="#FFFFFF"/></svg>
<svg style="left:1833px;top:741px" width="10" height="20" viewBox="0 0 10 20"><circle cx="6" cy="6" r="4.5" fill="#B8C4D0"/><path d="M0 19C0 13 3 11 6 11C9 11 12 13 12 19Z" fill="#B8C4D0"/></svg>
</body></html>
